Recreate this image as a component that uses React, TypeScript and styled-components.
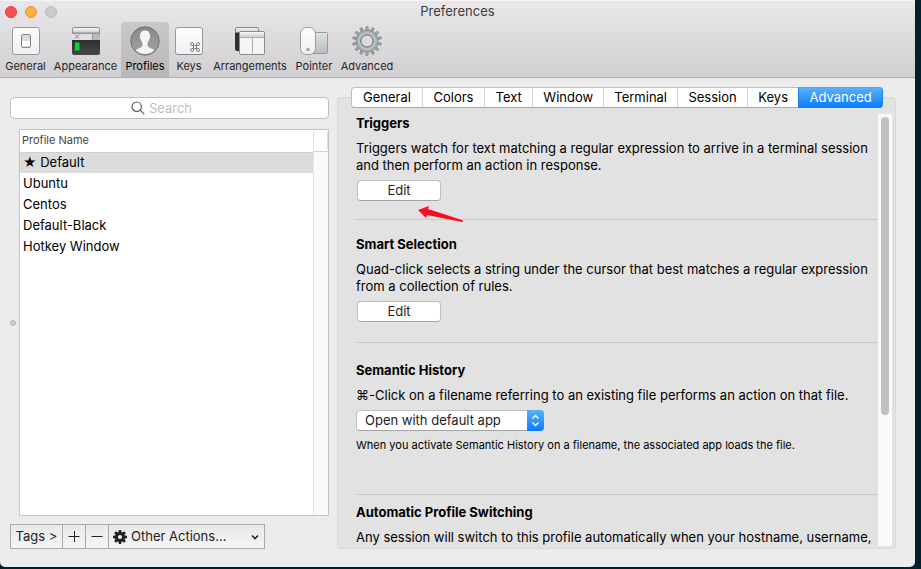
import React, { ReactNode } from "react";
import styled, { createGlobalStyle, css } from "styled-components";

const Global = createGlobalStyle`
  * { box-sizing: border-box; }
  body { margin: 0; background: #02222b; }
  body, button, input, select, table {
    font-family: Inter, "Liberation Sans", sans-serif;
    font-size: 13px;
    line-height: 17px;
    color: #000;
  }
`;

const Desktop = styled.div`
  height: 100vh;
  padding: 0 6px 2px 0;
  background: #02222b;
`;

const Window = styled.main`
  height: 100%;
  display: flex;
  flex-direction: column;
  background: #ececec;
  border-radius: 0 0 5px 5px;
  overflow: hidden;
`;

const Header = styled.header`
  background: linear-gradient(#e9e7e9, #d1cfd1);
  border-top: 1px solid #f4f3f4;
  border-bottom: 1px solid #b1afb1;
`;

const TitleBar = styled.div`
  height: 21px;
  display: grid;
  grid-template-columns: 1fr auto 1fr;
  align-items: center;
  padding: 0 5px;
`;

const Lights = styled.div`
  display: flex;
  gap: 8px;
`;

const Light = styled.button<{ $fill: string; $edge: string }>`
  width: 12px;
  height: 12px;
  padding: 0;
  border-radius: 50%;
  border: 1px solid ${(p) => p.$edge};
  background: ${(p) => p.$fill};
`;

const Title = styled.h1`
  margin: 0;
  font-size: 13px;
  font-weight: 400;
  color: #3c3c3c;
`;

const Toolbar = styled.nav`
  display: flex;
  padding-left: 1px;
`;

const Tool = styled.button<{ $width: number; $active?: boolean }>`
  width: ${(p) => p.$width}px;
  height: 55px;
  padding: 4px 0 0;
  border: 0;
  border-radius: 4px 4px 0 0;
  background: ${(p) => (p.$active ? "linear-gradient(#c9c7c9, #b9b7b9)" : "none")};
  display: flex;
  flex-direction: column;
  align-items: center;
  gap: 2px;
  font-size: 11px;
  line-height: 16px;
  white-space: nowrap;
  color: ${(p) => (p.$active ? "#000" : "#262626")};
  svg { display: block; flex: none; }
`;

const Body = styled.div`
  flex: 1;
  min-height: 0;
  display: flex;
  gap: 8px;
  padding: 9px 19px 18px 10px;
`;

const Sidebar = styled.section`
  flex: 0 1 319px;
  display: flex;
  flex-direction: column;
  padding-top: 10px;
`;

const SearchField = styled.label`
  position: relative;
  display: block;
  svg { position: absolute; left: calc(50% - 39px); top: 4px; }
`;

const SearchInput = styled.input`
  appearance: none;
  display: block;
  width: 100%;
  height: 22px;
  padding: 0 8px 0 10px;
  border: 1px solid #bdbdbd;
  border-radius: 4px;
  background: #fff;
  text-align: center;
  outline: 0;
  &::placeholder { color: #bfbfbf; opacity: 1; }
  &::-webkit-search-cancel-button { display: none; }
`;

const ListRow = styled.div`
  flex: 1;
  min-height: 0;
  display: flex;
  align-items: center;
  gap: 3px;
  margin: 10px 0 8px;
`;

const Grip = styled.div`
  width: 6px;
  height: 6px;
  border-radius: 50%;
  border: 1px solid #b4b4b4;
  background: #d0d0d0;
`;

const ListBox = styled.div`
  flex: 1;
  align-self: stretch;
  display: flex;
  align-items: flex-start;
  border: 1px solid #c4c4c4;
  background: #fff;
`;

const ProfileTable = styled.table`
  flex: 1;
  border-collapse: collapse;
  th {
    height: 22px;
    padding: 0 2px;
    border-bottom: 1px solid #d0d0d0;
    font-size: 11px;
    font-weight: 400;
    text-align: left;
    color: #444;
  }
`;

const Profile = styled.tr<{ $selected?: boolean }>`
  background: ${(p) => (p.$selected ? "#dcdcdc" : "none")};
  td { height: 21px; padding: 0 3px; }
`;

const Track = styled.div`
  align-self: stretch;
  width: 15px;
  display: flex;
  flex-direction: column;
`;

const TrackCap = styled.div`
  height: 22px;
  padding: 2px 0;
  border-bottom: 1px solid #d0d0d0;
  &::before {
    content: "";
    display: block;
    height: 17px;
    border: solid #dcdcdc;
    border-width: 0 1px;
  }
`;

const TrackBody = styled.div`
  flex: 1;
  background: #fafafa;
  border-left: 1px solid #e6e6e6;
`;

const ActionBar = styled.div`
  align-self: flex-start;
  display: flex;
  border: 1px solid #a9a9a9;
  background: linear-gradient(#e9e9e9, #f5f5f5);
`;

const ActionButton = styled.button<{ $width: number }>`
  width: ${(p) => p.$width}px;
  height: 23px;
  padding: 0;
  border: 0;
  border-right: 1px solid #a9a9a9;
  background: none;
  color: #222;
  display: flex;
  align-items: center;
  justify-content: center;
`;

const ActionMenu = styled.label`
  position: relative;
  display: block;
  svg { position: absolute; top: 5px; pointer-events: none; }
  svg:first-child { left: 4px; }
  svg:last-child { right: 4px; }
`;

const ActionSelect = styled.select`
  appearance: none;
  display: block;
  width: 155px;
  height: 23px;
  padding: 0 20px 0 22px;
  border: 0;
  background: none;
  color: #222;
`;

const Pane = styled.section`
  flex: 1;
  min-width: 0;
  display: flex;
  flex-direction: column;
`;

const Tabs = styled.div`
  z-index: 1;
  display: flex;
  margin: 0 13px 0 14px;
  border: 1px solid #bfbfbf;
  border-bottom-color: #a8a8a8;
  border-radius: 4px;
  background: #fff;
`;

const Tab = styled.button<{ $basis: number; $active?: boolean }>`
  flex: ${(p) => p.$basis} 1 0;
  min-width: 0;
  height: 19px;
  padding: 0 0 1px;
  border: 0;
  border-right: 1px solid #d4d4d4;
  background: none;
  white-space: nowrap;
  ${(p) =>
    p.$active &&
    css`
      height: 21px;
      margin: -1px;
      border: 1px solid #1a82e8;
      border-top-color: #4da6f5;
      border-radius: 0 4px 4px 0;
      background: linear-gradient(#5ab1fa, #0a7cff);
      color: #fff;
    `}
`;

const GroupBox = styled.div`
  flex: 1;
  min-height: 0;
  display: flex;
  margin-top: -11px;
  padding: 16px 3px 2px 18px;
  border: 1px solid #dadada;
  border-radius: 4px;
  background: #e2e2e2;
`;

const Scroller = styled.div`
  flex: 1;
  min-width: 0;
  overflow: hidden;
`;

const ScrollTrack = styled.div`
  width: 14px;
  padding: 3px;
  background: #fafafa;
`;

const ScrollThumb = styled.div`
  width: 8px;
  height: 70%;
  border-radius: 4px;
  background: #c1c1c1;
`;

const Section = styled.section<{ $top: number; $bottom: number }>`
  position: relative;
  padding: ${(p) => p.$top}px 0 ${(p) => p.$bottom}px;
  border-bottom: 1px solid #c8c8c8;
  &:last-child { border: 0; }
`;

const Heading = styled.h2`
  margin: 0 0 8px;
  font-size: 13px;
  font-weight: 700;
`;

const Text = styled.p`
  margin: 0 0 6px;
  white-space: nowrap;
`;

const Note = styled.p`
  margin: 6px 0 0;
  font-size: 11px;
`;

const PushButton = styled.button`
  display: block;
  width: 84px;
  height: 21px;
  margin-left: 1px;
  padding: 0 0 1px;
  border: 1px solid #bfbfbf;
  border-bottom-color: #a4a4a4;
  border-radius: 4px;
  background: #fff;
  color: #222;
`;

const PopUp = styled.label`
  position: relative;
  display: block;
  width: 188px;
  svg { position: absolute; right: 0; top: 0; pointer-events: none; }
`;

const PopUpSelect = styled.select`
  appearance: none;
  display: block;
  width: 100%;
  height: 21px;
  padding: 0 20px 0 8px;
  border: 1px solid #bfbfbf;
  border-bottom-color: #a4a4a4;
  border-radius: 4px;
  background: #fff;
  color: #222;
`;

const Arrow = styled.svg`
  position: absolute;
  left: 62px;
  top: 91px;
`;

const teeth = (count: number) => Array.from({ length: count }, (_, i) => (i * 360) / count);

const GeneralIcon = () => (
  <svg width="30" height="30" viewBox="0 0 30 30">
    <defs>
      <linearGradient id="plate" x2="0" y2="1">
        <stop stopColor="#fdfdfd" />
        <stop offset="1" stopColor="#eef0f2" />
      </linearGradient>
    </defs>
    <rect x="1.5" y="1.5" width="27" height="27" rx="2.5" fill="url(#plate)" stroke="#97999b" />
    <rect x="10.5" y="8.5" width="9" height="13" rx="1.5" fill="#d9dcde" stroke="#85888a" />
    <rect x="11" y="15" width="8" height="5" fill="#fff" />
  </svg>
);

const AppearanceIcon = () => (
  <svg width="30" height="30" viewBox="0 0 30 30">
    <defs>
      <linearGradient id="bar" x2="0" y2="1">
        <stop stopColor="#fafafa" />
        <stop offset="1" stopColor="#cdcdcd" />
      </linearGradient>
      <linearGradient id="term" x2="0" y2="1">
        <stop stopColor="#222" />
        <stop offset="1" stopColor="#484848" />
      </linearGradient>
    </defs>
    <rect x="1" y="7" width="28" height="22" rx="2" fill="url(#term)" />
    <path d="M1.5 7V3q0-1.500 1.500-1.500h24q1.500 0 1.500 1.500v4z" fill="url(#bar)" stroke="#8a8a8a" />
    <rect x="1" y="7" width="28" height="7" fill="#dfdfdf" />
    <rect x="21" y="7" width="8" height="7" fill="#b9b9b9" />
    <path d="M4 8.500l4 4M8 8.500l-4 4" stroke="#888" />
    <path d="M1 7.500h28M21.500 7v7" stroke="#999" />
    <rect x="4" y="16.500" width="4.500" height="8" fill="#00d83a" />
  </svg>
);

const ProfilesIcon = () => (
  <svg width="30" height="30" viewBox="0 0 30 30">
    <defs>
      <linearGradient id="disc" x2="0" y2="1">
        <stop stopColor="#8a8a8a" />
        <stop offset="1" stopColor="#a2a2a2" />
      </linearGradient>
      <clipPath id="round"><circle cx="15" cy="15" r="13" /></clipPath>
    </defs>
    <circle cx="15" cy="15" r="14.200" fill="url(#disc)" stroke="#707070" />
    <path
      clipPath="url(#round)"
      d="M15 4.500c-3.400 0-5.200 2.300-4.900 5.600-.7.500-.3 2.500.6 3.200.4 1.600.9 2.600 1.700 3.400v3c-.6 1.800-3.600 2.600-5.400 3.600-1 .6-1.600 1.400-2 2.200C7.500 27.500 11 29 15 29s7.500-1.500 10-3.500c-.4-.8-1-1.600-2-2.200-1.800-1-4.800-1.800-5.400-3.600v-3c.8-.8 1.300-1.800 1.700-3.400.9-.7 1.300-2.700.6-3.200C20.200 6.800 18.400 4.500 15 4.500z"
      fill="#f4f4f4"
    />
  </svg>
);

const KeysIcon = () => (
  <svg width="30" height="30" viewBox="0 0 30 30">
    <rect x="1.500" y="1.500" width="27" height="27" rx="2.500" fill="url(#plate)" stroke="#97999b" />
    <path d="M3 28.500h24" stroke="#808385" />
    <path
      d="M19.500 19.500h3v3h-3zM19.500 19.500h-1.500a1.500 1.500 0 1 1 1.500-1.500zM22.500 19.500v-1.500a1.500 1.500 0 1 1 1.500 1.500zM22.500 22.500h1.500a1.500 1.500 0 1 1-1.500 1.500zM19.500 22.500v1.500a1.500 1.500 0 1 1-1.500-1.500z"
      fill="none"
      stroke="#808285"
    />
  </svg>
);

const ArrangementsIcon = () => (
  <svg width="32" height="30" viewBox="0 0 32 30">
    <path d="M1 6h8v19H3q-2 0-2-2z" fill="#303030" />
    <path d="M1.500 6.500V3q0-1.500 1.500-1.500h20q1.500 0 1.500 1.500v3.500z" fill="url(#bar)" stroke="#858585" />
    <rect x="5.500" y="5.500" width="25" height="23" rx="1.500" fill="#f4f5f8" stroke="#8b8b8b" />
    <path d="M6 11V7q0-1 1-1h22q1 0 1 1v4z" fill="url(#bar)" />
    <path d="M6 11.500h24M18.500 12v16" stroke="#adadad" />
  </svg>
);

const PointerIcon = () => (
  <svg width="30" height="30" viewBox="0 0 30 30">
    <defs>
      <linearGradient id="pad" x2="0" y2="1">
        <stop stopColor="#e0e3e3" />
        <stop offset="1" stopColor="#b8bdbc" />
      </linearGradient>
    </defs>
    <rect x="12.500" y="6.500" width="16" height="21" rx="1" fill="url(#pad)" stroke="#979b9a" />
    <rect x="1.500" y="1.500" width="15" height="27" rx="6" fill="url(#plate)" stroke="#97999b" />
    <circle cx="9" cy="23.500" r="1.800" fill="#a5a7a8" />
  </svg>
);

const AdvancedIcon = () => (
  <svg width="32" height="30" viewBox="0 0 32 30">
    <g transform="translate(16 15)">
      {teeth(14).map((a) => (
        <path key={a} transform={`rotate(${a})`} d="M-1.600-10.200l.6-4.300h2l.6 4.300z" fill="#9ba5a5" stroke="#7b8484" strokeWidth=".6" />
      ))}
      <circle r="8.500" fill="none" stroke="#7b8484" strokeWidth="5" />
      <circle r="8.500" fill="none" stroke="#aab3b3" strokeWidth="4" />
      <circle r="8" fill="none" stroke="#bcc5c5" strokeWidth="1.500" />
      <circle r="6" fill="none" stroke="#7b8484" strokeWidth="1" />
    </g>
  </svg>
);

const tools: { label: string; width: number; icon: ReactNode; active?: boolean }[] = [
  { label: "General", width: 49, icon: <GeneralIcon /> },
  { label: "Appearance", width: 71, icon: <AppearanceIcon /> },
  { label: "Profiles", width: 48, icon: <ProfilesIcon />, active: true },
  { label: "Keys", width: 40, icon: <KeysIcon /> },
  { label: "Arrangements", width: 82, icon: <ArrangementsIcon /> },
  { label: "Pointer", width: 46, icon: <PointerIcon /> },
  { label: "Advanced", width: 60, icon: <AdvancedIcon /> },
];

const tabs = [
  { label: "General", basis: 71 },
  { label: "Colors", basis: 62 },
  { label: "Text", basis: 48 },
  { label: "Window", basis: 71 },
  { label: "Terminal", basis: 74 },
  { label: "Session", basis: 70 },
  { label: "Keys", basis: 51 },
  { label: "Advanced", basis: 84 },
];

const profiles = ["★ Default", "Ubuntu", "Centos", "Default-Black", "Hotkey Window"];

export default function App() {
  return (
    <Desktop>
      <Global />
      <Window>
        <Header>
          <TitleBar>
            <Lights>
              <Light aria-label="Close" $fill="#fc4f55" $edge="#e2383f" />
              <Light aria-label="Minimize" $fill="#fdb13f" $edge="#e0963a" />
              <Light aria-label="Zoom" $fill="#cdcccd" $edge="#b9b8b9" />
            </Lights>
            <Title>Preferences</Title>
          </TitleBar>
          <Toolbar>
            {tools.map((t) => (
              <Tool key={t.label} $width={t.width} $active={t.active}>
                {t.icon}
                {t.label}
              </Tool>
            ))}
          </Toolbar>
        </Header>
        <Body>
          <Sidebar>
            <SearchField>
              <svg width="14" height="14" viewBox="0 0 14 14" fill="none" stroke="#5a5a5a" strokeWidth="1.200">
                <circle cx="5.700" cy="5.700" r="4.700" />
                <path d="M9.200 9.200l4 4" />
              </svg>
              <SearchInput type="search" placeholder="Search" aria-label="Search" />
            </SearchField>
            <ListRow>
              <Grip />
              <ListBox>
                <ProfileTable>
                  <thead>
                    <tr><th scope="col">Profile Name</th></tr>
                  </thead>
                  <tbody>
                    {profiles.map((name, i) => (
                      <Profile key={name} $selected={i === 0}><td>{name}</td></Profile>
                    ))}
                  </tbody>
                </ProfileTable>
                <Track>
                  <TrackCap />
                  <TrackBody />
                </Track>
              </ListBox>
            </ListRow>
            <ActionBar>
              <ActionButton $width={52}>Tags &gt;</ActionButton>
              <ActionButton $width={23} aria-label="Add profile">
                <svg width="12" height="12" viewBox="0 0 12 12" stroke="#222"><path d="M.5 5.500h11M6.500 0v11" /></svg>
              </ActionButton>
              <ActionButton $width={23} aria-label="Remove profile">
                <svg width="12" height="12" viewBox="0 0 12 12" stroke="#222"><path d="M.5 5.500h11" /></svg>
              </ActionButton>
              <ActionMenu>
                <svg width="14" height="14" viewBox="-7 -7 14 14">
                  {teeth(8).map((a) => (
                    <path key={a} transform={`rotate(${a})`} d="M-1.600-4l.4-3h2.400l.4 3z" fill="#222" />
                  ))}
                  <circle r="3.600" fill="none" stroke="#222" strokeWidth="3" />
                </svg>
                <ActionSelect aria-label="Other actions">
                  <option>Other Actions...</option>
                </ActionSelect>
                <svg width="10" height="14" viewBox="0 0 10 14" fill="none" stroke="#222" strokeWidth="1.600">
                  <path d="M2 5.500l3 3 3-3" />
                </svg>
              </ActionMenu>
            </ActionBar>
          </Sidebar>
          <Pane>
            <Tabs role="tablist">
              {tabs.map((t) => (
                <Tab key={t.label} role="tab" $basis={t.basis} $active={t.label === "Advanced"} aria-selected={t.label === "Advanced"}>
                  {t.label}
                </Tab>
              ))}
            </Tabs>
            <GroupBox>
              <Scroller>
                <Section $top={1} $bottom={18}>
                  <Heading>Triggers</Heading>
                  <Text>
                    Triggers watch for text matching a regular expression to arrive in a terminal session
                    <br />
                    and then perform an action in response.
                  </Text>
                  <PushButton>Edit</PushButton>
                  <Arrow width="48" height="20" viewBox="0 0 48 20">
                    <path d="M0 5L11 1L10 4L44 15Q46 17 44 17L9 10L8 13Z" fill="#fc0d1b" />
                  </Arrow>
                </Section>
                <Section $top={16} $bottom={20}>
                  <Heading>Smart Selection</Heading>
                  <Text>
                    Quad-click selects a string under the cursor that best matches a regular expression
                    <br />
                    from a collection of rules.
                  </Text>
                  <PushButton>Edit</PushButton>
                </Section>
                <Section $top={19} $bottom={40}>
                  <Heading>Semantic History</Heading>
                  <Text>⌘-Click on a filename referring to an existing file performs an action on that file.</Text>
                  <PopUp>
                    <PopUpSelect aria-label="Semantic history action">
                      <option>Open with default app</option>
                    </PopUpSelect>
                    <svg width="17" height="21" viewBox="0 0 17 21">
                      <defs>
                        <linearGradient id="blue" x2="0" y2="1">
                          <stop stopColor="#5ab1fa" />
                          <stop offset="1" stopColor="#0a7cff" />
                        </linearGradient>
                      </defs>
                      <path d="M0 0h13q4 0 4 4v13q0 4-4 4H0z" fill="url(#blue)" />
                      <path d="M5.500 8.500l3-3 3 3M5.500 12.500l3 3 3-3" fill="none" stroke="#fff" strokeWidth="1.400" />
                    </svg>
                  </PopUp>
                  <Note>When you activate Semantic History on a filename, the associated app loads the file.</Note>
                </Section>
                <Section $top={9} $bottom={0}>
                  <Heading>Automatic Profile Switching</Heading>
                  <Text>Any session will switch to this profile automatically when your hostname, username,</Text>
                </Section>
              </Scroller>
              <ScrollTrack>
                <ScrollThumb />
              </ScrollTrack>
            </GroupBox>
          </Pane>
        </Body>
      </Window>
    </Desktop>
  );
}
